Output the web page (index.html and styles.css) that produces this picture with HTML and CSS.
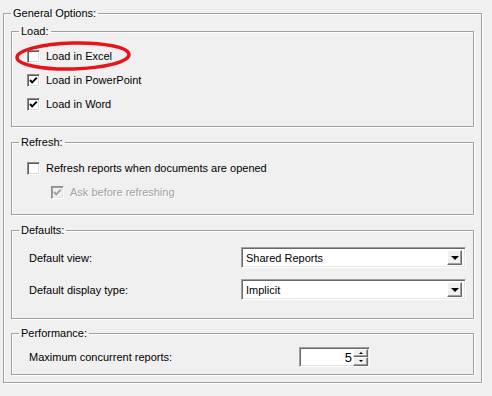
FILE: index.html
```html
<!DOCTYPE html>
<html lang="en">
<head>
  <meta charset="UTF-8">
  <title>General Options</title>
  <link rel="stylesheet" href="styles.css">
</head>
<body>
  <fieldset class="group outer">
    <legend>General Options:</legend>
    <div class="outer-body">

      <fieldset class="group load">
        <legend>Load:</legend>
        <div class="group-body">
          <label class="check"><span class="box"></span>Load in Excel</label>
          <label class="check"><span class="box"><svg viewBox="0 0 11 11"><polyline points="2,5 4.2,7.3 8.8,2.7"/></svg></span>Load in PowerPoint</label>
          <label class="check"><span class="box"><svg viewBox="0 0 11 11"><polyline points="2,5 4.2,7.3 8.8,2.7"/></svg></span>Load in Word</label>
        </div>
      </fieldset>

      <fieldset class="group refresh">
        <legend>Refresh:</legend>
        <div class="group-body">
          <label class="check"><span class="box"></span>Refresh reports when documents are opened</label>
          <label class="check sub disabled"><span class="box"><svg viewBox="0 0 11 11"><polyline points="2,5 4.2,7.3 8.8,2.7"/></svg></span>Ask before refreshing</label>
        </div>
      </fieldset>

      <fieldset class="group defaults">
        <legend>Defaults:</legend>
        <div class="group-body fields">
          <div class="field">
            <span class="field-label">Default view:</span>
            <div class="combo"><span class="combo-text">Shared Reports</span><span class="combo-btn"><i class="arrow-down"></i></span></div>
          </div>
          <div class="field">
            <span class="field-label">Default display type:</span>
            <div class="combo"><span class="combo-text">Implicit</span><span class="combo-btn"><i class="arrow-down"></i></span></div>
          </div>
        </div>
      </fieldset>

      <fieldset class="group performance">
        <legend>Performance:</legend>
        <div class="group-body fields">
          <div class="field">
            <span class="field-label wide">Maximum concurrent reports:</span>
            <div class="spinner">
              <span class="spin-value">5</span>
              <span class="spin-btns">
                <span class="spin-btn"><i class="arrow-up small"></i></span>
                <span class="spin-btn"><i class="arrow-down small"></i></span>
              </span>
            </div>
          </div>
        </div>
      </fieldset>

    </div>
  </fieldset>

  <svg class="annotation" width="124" height="36" viewBox="0 0 124 36">
    <ellipse cx="60" cy="18" rx="56" ry="13" transform="rotate(-1.5 60 18)"/>
  </svg>
</body>
</html>
```

FILE: styles.css
```css
body {
  margin: 0;
  background: #f0f0f0;
  font-family: 'Liberation Sans', Arial, sans-serif;
  font-size: 11px;
  color: #000;
  position: relative;
  height: 396px;
  overflow: hidden;
}

.group {
  margin: 0;
  padding: 0;
  min-inline-size: 0;
  border: 1px solid #a0a0a0;
  box-shadow: inset 1px 1px 0 #fff, 1px 1px 0 #fff;
}

.group legend {
  padding: 0 2px;
  margin-left: 7px;
  line-height: 14px;
}

.outer {
  width: 479px;
  box-sizing: border-box;
  margin: 6px 0 0 3px;
  padding: 4px 0 7px 0;
}

.outer-body {
  padding: 0 7px;
}

.load {
  padding: 6px 0 10px 0;
}

.refresh {
  margin-top: 8px;
  padding: 7px 0 10px 0;
}

.defaults {
  margin-top: 8px;
  padding: 10px 0 18px 0;
}

.performance {
  margin-top: 7px;
  padding: 7px 0 7px 0;
}

.group-body {
  padding-left: 15px;
}

.group-body.fields {
  padding-left: 17px;
}

/* checkboxes */
.check {
  display: flex;
  align-items: center;
  height: 24px;
}

.check.sub {
  padding-left: 24px;
}

.box {
  width: 13px;
  height: 13px;
  box-sizing: border-box;
  border: 1px solid;
  border-color: #8e8e8e #fff #fff #8e8e8e;
  box-shadow: inset 1px 1px 0 #5a5a5a, inset -1px -1px 0 #dcdcdc;
  background: #fff;
  margin-right: 6px;
  display: flex;
  align-items: center;
  justify-content: center;
}

.box svg {
  width: 11px;
  height: 11px;
}

.box polyline {
  fill: none;
  stroke: #000;
  stroke-width: 1.9;
}

.disabled {
  color: #a0a0a0;
  text-shadow: 1px 1px 0 #fff;
}

.disabled .box {
  background: #f0f0f0;
  box-shadow: inset 1px 1px 0 #a0a0a0, inset -1px -1px 0 #e3e3e3;
}

.disabled .box polyline {
  stroke: #a0a0a0;
}

/* label + control rows */
.field {
  display: flex;
  align-items: center;
}

.field + .field {
  margin-top: 11px;
}

.field-label {
  width: 212px;
}

.field-label.wide {
  width: 270px;
}

.combo {
  width: 225px;
  height: 21px;
  box-sizing: border-box;
  background: #fff;
  border: 1px solid;
  border-color: #a0a0a0 #fff #fff #a0a0a0;
  box-shadow: inset 1px 1px 0 #696969, inset -1px -1px 0 #e3e3e3;
  display: flex;
  align-items: center;
  padding: 2px 2px 2px 4px;
}

.combo-text {
  flex: 1;
}

.combo-btn,
.spin-btn {
  background: #f0f0f0;
  box-sizing: border-box;
  border: 1px solid;
  border-color: #fff #696969 #696969 #fff;
  box-shadow: inset -1px -1px 0 #a0a0a0;
  display: flex;
  align-items: center;
  justify-content: center;
}

.combo-btn {
  width: 15px;
  height: 15px;
  margin-right: 1px;
  padding-top: 1px;
}

.arrow-down,
.arrow-up {
  width: 0;
  height: 0;
  border-left: 4px solid transparent;
  border-right: 4px solid transparent;
}

.arrow-down {
  border-top: 4px solid #000;
}

.arrow-up {
  border-bottom: 4px solid #000;
}

.arrow-down.small,
.arrow-up.small {
  border-left-width: 2px;
  border-right-width: 2px;
}

.arrow-down.small {
  border-top-width: 2px;
}

.arrow-up.small {
  border-bottom-width: 2px;
}

/* spinner */
.spinner {
  width: 71px;
  height: 20px;
  box-sizing: border-box;
  background: #fff;
  border: 1px solid;
  border-color: #a0a0a0 #fff #fff #a0a0a0;
  box-shadow: inset 1px 1px 0 #696969, inset -1px -1px 0 #e3e3e3;
  display: flex;
  align-items: center;
  padding: 1px 1px 1px 2px;
  font-size: 13px;
}

.spin-value {
  flex: 1;
  text-align: right;
  padding-right: 1px;
}

.spin-btns {
  display: flex;
  flex-direction: column;
  width: 15px;
  height: 17px;
}

.spin-btn {
  flex: 1;
}

/* red highlight drawn over the first option */
.annotation {
  position: absolute;
  left: 13px;
  top: 38px;
}

.annotation ellipse {
  fill: none;
  stroke: #e8141c;
  stroke-width: 3.5;
}
```
